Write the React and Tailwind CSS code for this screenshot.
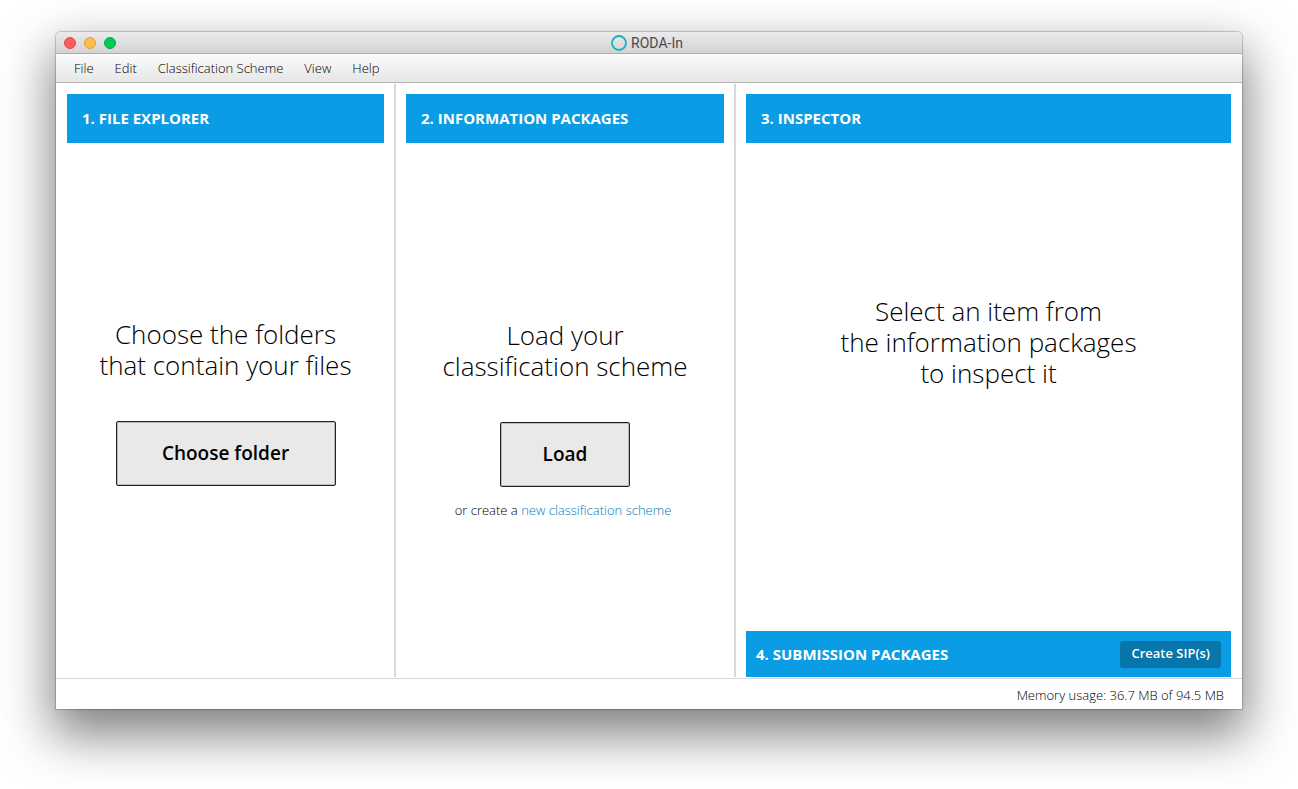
const MENUS = ["File", "Edit", "Classification Scheme", "View", "Help"];

function PaneHeader({ children }) {
  return (
    <h2 className="flex h-[49px] shrink-0 items-center bg-[#0a9ce4] px-[15px] text-[15px] font-bold text-white">
      {children}
    </h2>
  );
}

function BigButton({ className, children }) {
  return (
    <button
      type="button"
      className={`h-[65px] rounded-[2px] border border-[#222] bg-[#e9e9e9] text-[19px] font-semibold text-black shadow-[inset_0_0_0_1px_#bbb] ${className}`}
    >
      {children}
    </button>
  );
}

function Prompt({ children }) {
  return <p className="text-center text-[26px] leading-[31px] font-light text-black">{children}</p>;
}

export default function App() {
  return (
    <div className="flex min-h-screen flex-col bg-white px-14 pt-8 pb-20 font-['Open_Sans','Noto_Sans',sans-serif]">
      <div className="flex grow flex-col rounded-t-[5px] bg-white shadow-[0_0_1px_1px_rgba(0,0,0,0.2),0_22px_50px_4px_rgba(0,0,0,0.5)]">
        <header className="relative flex h-[22px] shrink-0 items-center justify-center rounded-t-[5px] border-b border-[#acacac] bg-linear-to-b from-[#ebebeb] to-[#d3d3d3]">
          <div className="absolute left-2 flex gap-2">
            <button type="button" aria-label="Close" className="size-3 rounded-full border border-[#e2484b] bg-[#ff5c5c]" />
            <button type="button" aria-label="Minimize" className="size-3 rounded-full border border-[#e0a03c] bg-[#ffbd4c]" />
            <button type="button" aria-label="Zoom" className="size-3 rounded-full border border-[#00ac48] bg-[#00ca56]" />
          </div>
          <h1 className="flex items-center gap-1 pr-1 font-['Roboto',sans-serif] text-[14px] leading-5 font-normal text-[#4a4a4a]">
            <svg viewBox="0 0 16 16" className="size-4" aria-hidden="true">
              <circle cx="8" cy="8" r="7" fill="none" stroke="#13b3bd" strokeWidth="1.8" />
            </svg>
            RODA-In
          </h1>
        </header>

        <nav className="flex h-[29px] shrink-0 items-center gap-[21px] border-b border-[#b5b5b5] bg-linear-to-b from-[#fbfbfb] to-[#e6e6e6] px-[18px] pt-[2px] text-[13px] font-light text-black">
          {MENUS.map((m) => (
            <button key={m} type="button">{m}</button>
          ))}
        </nav>

        <main className="grid grow grid-cols-[340fr_340fr_506fr] pt-px">
          <section className="flex flex-col border-r-2 border-[#d8d8d8] pt-[10px] pr-[10px] pl-[11px]">
            <PaneHeader>1. FILE EXPLORER</PaneHeader>
            <div className="flex grow flex-col items-center justify-center gap-10 pb-4">
              <Prompt>
                Choose the folders
                <br />
                that contain your files
              </Prompt>
              <BigButton className="w-[220px]">Choose folder</BigButton>
            </div>
          </section>

          <section className="flex flex-col border-r-2 border-[#d8d8d8] px-[10px] pt-[10px]">
            <PaneHeader>2. INFORMATION PACKAGES</PaneHeader>
            <div className="flex grow flex-col items-center justify-center pt-[18px]">
              <Prompt>
                Load your
                <br />
                classification scheme
              </Prompt>
              <div className="mt-10">
                <BigButton className="w-[130px]">Load</BigButton>
              </div>
              <p className="mt-[14px] pr-1 text-[13px] leading-[18px] font-light text-black">
                or create a{" "}
                <a href="#new" className="text-[#007ab8]">new classification scheme</a>
              </p>
            </div>
          </section>

          <section className="flex flex-col pt-[10px] pr-[11px] pl-[10px]">
            <PaneHeader>3. INSPECTOR</PaneHeader>
            <div className="flex grow flex-col items-center justify-center pb-[90px]">
              <Prompt>
                Select an item from
                <br />
                the information packages
                <br />
                to inspect it
              </Prompt>
            </div>
            <div className="flex h-[46px] shrink-0 items-center justify-between bg-[#0a9ce4] px-[10px]">
              <h2 className="text-[15px] font-bold text-white">4. SUBMISSION PACKAGES</h2>
              <button type="button" className="h-[27px] rounded-[3px] bg-[#0875ab] px-[11px] text-[13px] font-semibold text-white">
                Create SIP(s)
              </button>
            </div>
          </section>
        </main>

        <footer className="mt-px flex h-[31px] shrink-0 items-center justify-end border-t border-[#d8d8d8] px-[18px] pt-[3px] text-[13px] font-light text-black">
          Memory usage: 36.7 MB of 94.5 MB
        </footer>
      </div>
    </div>
  );
}
